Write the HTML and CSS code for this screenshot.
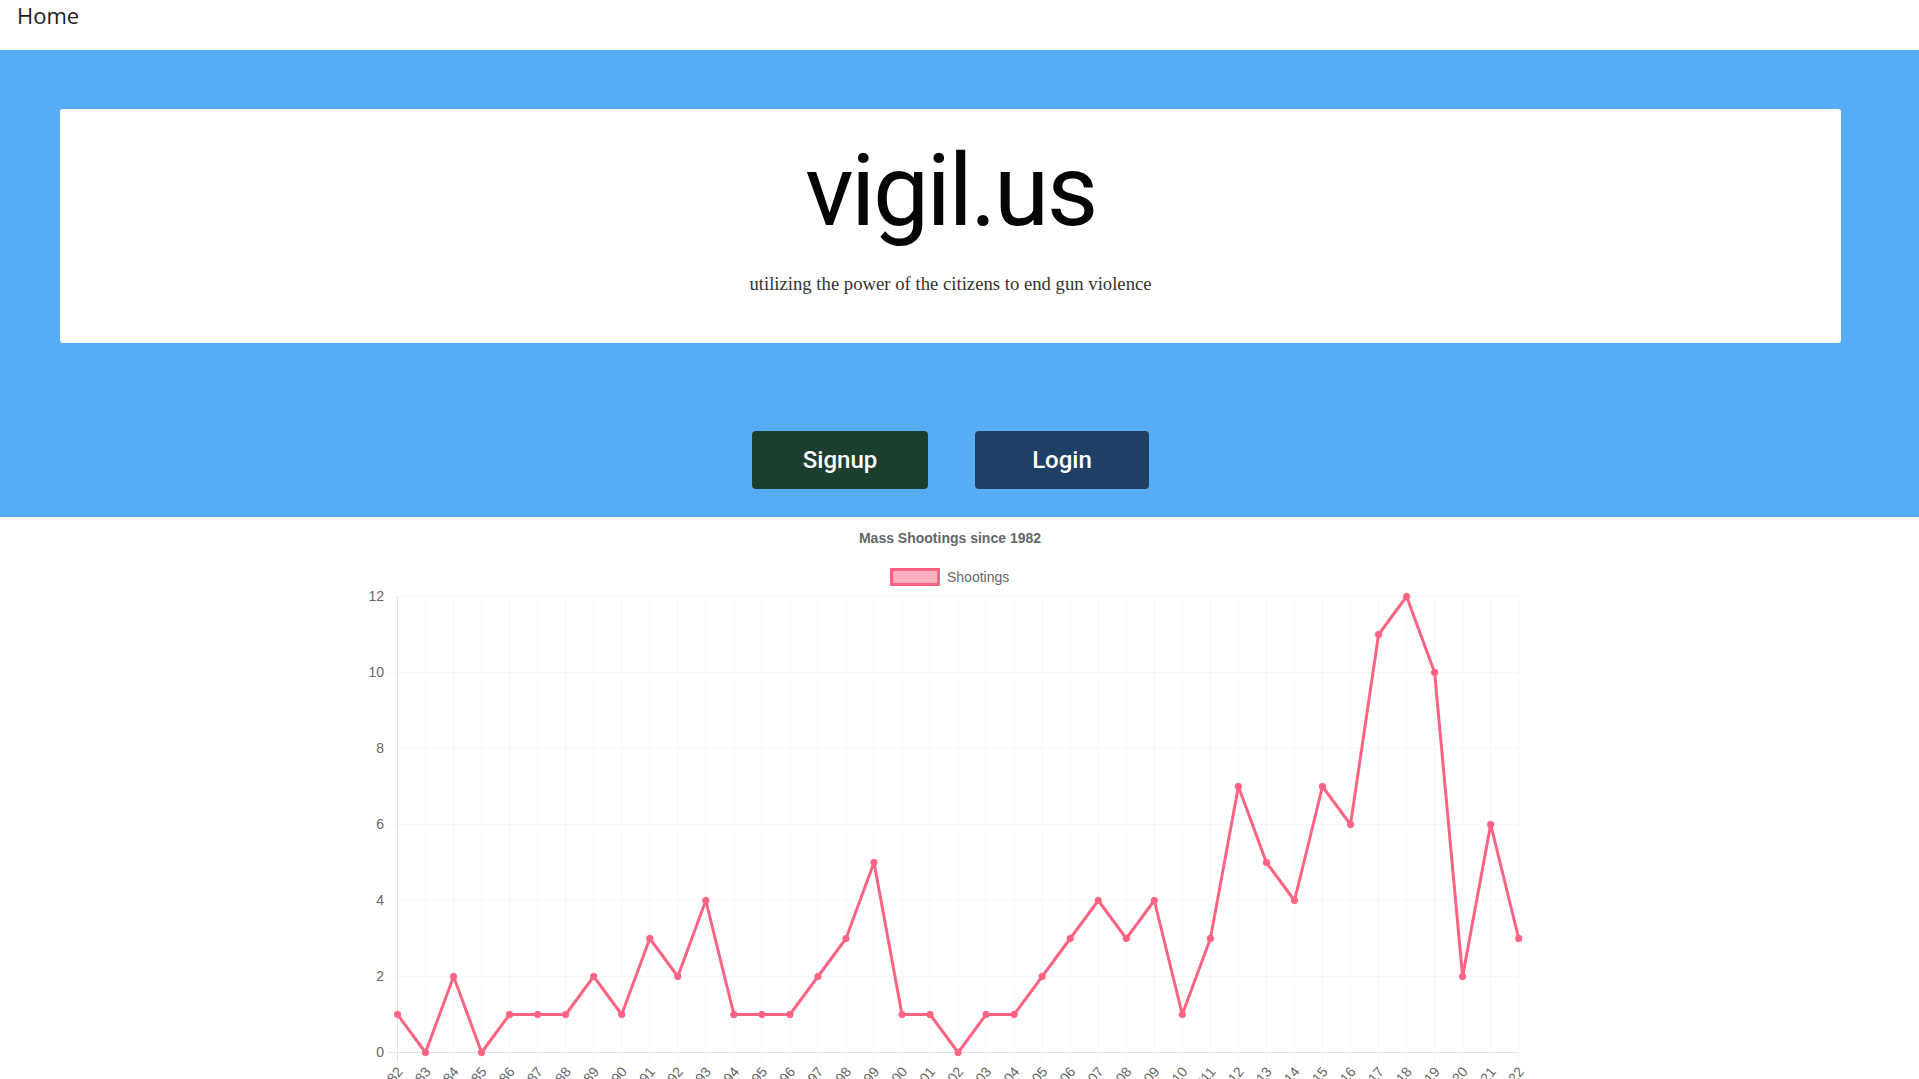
FILE: index.html
```html
<!DOCTYPE html>
<html lang="en">
<head>
<meta charset="utf-8">
<title>vigil.us</title>
<link rel="stylesheet" href="styles.css">
</head>
<body>
<nav class="topnav"><a class="nav-link" href="#">Home</a></nav>
<section class="hero">
  <div class="hero-inner">
    <div class="hero-card">
      <h1 class="brand">vigil.us</h1>
      <p class="tagline">utilizing the power of the citizens to end gun violence</p>
    </div>
    <div class="actions">
      <a class="btn btn-signup" href="#">Signup</a>
      <a class="btn btn-login" href="#">Login</a>
    </div>
  </div>
</section>
<section class="chart-section">
  <svg class="chart-svg" id="chart" width="1919" height="600" viewBox="0 517 1919 600" xmlns="http://www.w3.org/2000/svg">
    <g id="grid"></g>
    <text class="chart-title" x="950" y="543" text-anchor="middle">Mass Shootings since 1982</text>
    <rect class="legend-box" x="891.5" y="569.5" width="47" height="15"></rect>
    <text class="chart-text" x="947" y="582">Shootings</text>
    <g id="yticks"></g>
    <g id="xticks"></g>
    <polyline id="line" class="series-line" points=""></polyline>
    <g id="points"></g>
  </svg>
</section>
<script src="chart.js"></script>
</body>
</html>
```

FILE: styles.css
```css
html, body {
  margin: 0;
  padding: 0;
  overflow: hidden;
  background: #ffffff;
}

body {
  font-family: "Open Sans", "Liberation Sans", sans-serif;
  color: #222;
}

.topnav {
  height: 50px;
  padding-left: 17px;
  box-sizing: border-box;
}

.nav-link {
  display: block;
  font-family: "Open Sans", sans-serif;
  font-size: 22px;
  line-height: 30px;
  color: #1d1d1d;
  text-decoration: none;
}

.hero {
  background: #56adf5;
  padding: 59px 0 28px;
}

.hero-inner {
  margin: 0 78px 0 60px;
}

.hero-card {
  background: #ffffff;
  border-radius: 3px;
  height: 234px;
  box-sizing: border-box;
  padding-top: 32px;
  text-align: center;
}

.brand {
  margin: 0;
  font-family: Roboto, "Liberation Sans", sans-serif;
  font-weight: 400;
  font-size: 100px;
  line-height: 100px;
  letter-spacing: -2.5px;
  color: #050505;
}

.tagline {
  margin: 32px 0 0;
  font-family: "Liberation Serif", "Times New Roman", serif;
  font-size: 18.7px;
  color: #333333;
}

.actions {
  margin-top: 88px;
  display: flex;
  justify-content: center;
  gap: 47px;
}

.btn {
  display: flex;
  align-items: center;
  justify-content: center;
  height: 58px;
  border-radius: 4px;
  font-family: Roboto, "Liberation Sans", sans-serif;
  font-weight: 500;
  font-size: 24px;
  color: #ffffff;
  text-decoration: none;
}

.btn-signup {
  width: 176px;
  background: #1b3e2f;
}

.btn-login {
  width: 174px;
  background: #1f3f66;
}

.chart-section {
  height: 562px;
  overflow: hidden;
}

.chart-svg {
  display: block;
}

.chart-title {
  font-family: "Liberation Sans", Arial, sans-serif;
  font-weight: 700;
  font-size: 14px;
  fill: #666666;
}

.chart-text {
  font-family: "Liberation Sans", Arial, sans-serif;
  font-size: 14px;
  fill: #666666;
}

.legend-box {
  fill: #ffb1c1;
  stroke: #ff6384;
  stroke-width: 3;
}

.grid-line {
  stroke: #f7f7f7;
  stroke-width: 1;
}

.axis-line {
  stroke: #e2e2e2;
  stroke-width: 1;
}

.series-line {
  fill: none;
  stroke: #ff6384;
  stroke-width: 3;
  stroke-linejoin: round;
}

.series-point {
  fill: #ff6384;
  stroke: #ff6384;
  stroke-width: 1;
}
```

FILE: chart.js
```javascript
(function () {
  var data = [1,0,2,0,1,1,1,2,1,3,2,4,1,1,1,2,3,5,1,1,0,1,1,2,3,4,3,4,1,3,7,5,4,7,6,11,12,10,2,6,3];
  var NS = 'http://www.w3.org/2000/svg';
  var x0 = 397.5, step = 28.03, yBase = 1052.5, unit = 38;
  var xEnd = x0 + step * (data.length - 1);
  var grid = document.getElementById('grid');
  var yticks = document.getElementById('yticks');
  var xticks = document.getElementById('xticks');
  var pts = document.getElementById('points');

  function el(name, attrs, parent, text) {
    var e = document.createElementNS(NS, name);
    for (var k in attrs) e.setAttribute(k, attrs[k]);
    if (text !== undefined) e.textContent = text;
    parent.appendChild(e);
    return e;
  }

  for (var v = 0; v <= 12; v += 2) {
    var y = yBase - v * unit;
    el('line', {x1: x0 - 10, x2: xEnd, y1: y, y2: y, 'class': v === 0 ? 'axis-line' : 'grid-line'}, grid);
    el('text', {x: 384, y: y + 4, 'text-anchor': 'end', 'class': 'chart-text'}, yticks, String(v));
  }

  var points = [];
  for (var i = 0; i < data.length; i++) {
    var x = x0 + i * step;
    el('line', {x1: x, x2: x, y1: yBase - 12 * unit, y2: yBase + 10, 'class': i === 0 ? 'axis-line' : 'grid-line'}, grid);
    var py = yBase - data[i] * unit;
    points.push(x.toFixed(1) + ',' + py.toFixed(1));
    el('circle', {cx: x, cy: py, r: 3.2, 'class': 'series-point'}, pts);
    el('text', {
      x: 0, y: 0,
      'text-anchor': 'end',
      'class': 'chart-text',
      transform: 'translate(' + (x + 6).toFixed(1) + ',1072) rotate(-50)'
    }, xticks, String(1982 + i));
  }
  document.getElementById('line').setAttribute('points', points.join(' '));
})();
```
